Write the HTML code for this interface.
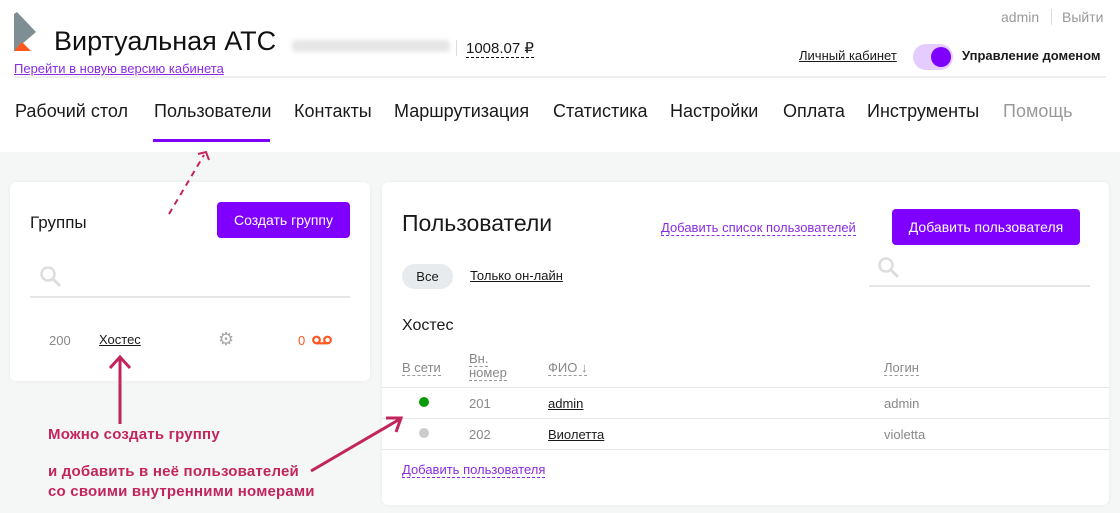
<!DOCTYPE html>
<html><head><meta charset="utf-8"><style>
*{margin:0;padding:0;box-sizing:border-box}
body{width:1120px;height:513px;overflow:hidden;background:#f5f6f6;font-family:"Liberation Sans",sans-serif;position:relative;color:#1a1a1a}
.a{position:absolute;white-space:nowrap}
.hdr{position:absolute;left:0;top:0;width:1120px;height:152px;background:#fff}
.card{position:absolute;background:#fff;border-radius:6px;box-shadow:0 0 3px rgba(0,0,0,.06)}
.nav{font-size:18px;top:101px;color:#1a1a1a}
.btn{position:absolute;background:#7f00ff;color:#fff;border-radius:4px;font-size:14px;text-align:center}
.dash{border-bottom:1px dashed #999}
.grey{color:#888}
.line{position:absolute;height:1px;background:#e6e6e6}
.red{color:#c2255c;font-size:15px;font-weight:bold;letter-spacing:.2px}
</style></head><body>
<div class="hdr"></div>
<svg class="a" style="left:14px;top:12px" width="24" height="40" viewBox="0 0 24 40"><polygon points="0,2 3,0 22,20 8,32 0,39" fill="#7f8d94"/><polygon points="0,39 8,30 17,39" fill="#ff5722"/></svg>
<div class="a" style="left:54px;top:26px;font-size:27px;color:#111">Виртуальная АТС</div>
<div class="a" style="left:292px;top:40px;width:158px;height:12px;background:#e6e6e6;border-radius:4px;filter:blur(2px)"></div>
<div class="a" style="left:456px;top:40px;width:1px;height:16px;background:#ddd"></div>
<div class="a" style="left:466px;top:39px;font-size:15px;border-bottom:1px dashed #111">1008.07 ₽</div>
<div class="a" style="left:14px;top:61px;font-size:13px;color:#8a2be2;text-decoration:underline">Перейти в новую версию кабинета</div>
<div class="a" style="left:1001px;top:9px;font-size:14px;color:#999">admin</div>
<div class="a" style="left:1051px;top:9px;width:1px;height:16px;background:#ddd"></div>
<div class="a" style="left:1062px;top:9px;font-size:14px;color:#999">Выйти</div>
<div class="a" style="left:799px;top:48px;font-size:13px;text-decoration:underline">Личный кабинет</div>
<div class="a" style="left:913px;top:44px;width:40px;height:26px;border-radius:13px;background:#e4ccff"></div>
<div class="a" style="left:931px;top:47px;width:20px;height:20px;border-radius:50%;background:#7f00ff"></div>
<div class="a" style="left:962px;top:48px;font-size:13px;font-weight:bold">Управление доменом</div>
<div class="line" style="left:14px;top:76px;width:1092px;background:#eee;height:2px"></div>
<div class="a nav" style="left:15px">Рабочий стол</div>
<div class="a nav" style="left:154px">Пользователи</div>
<div class="a" style="left:153px;top:139px;width:117px;height:3px;background:#7f00ff"></div>
<div class="a nav" style="left:294px">Контакты</div>
<div class="a nav" style="left:394px">Маршрутизация</div>
<div class="a nav" style="left:553px">Статистика</div>
<div class="a nav" style="left:670px">Настройки</div>
<div class="a nav" style="left:783px">Оплата</div>
<div class="a nav" style="left:867px">Инструменты</div>
<div class="a nav" style="left:1003px;color:#999">Помощь</div>

<div class="card" style="left:10px;top:182px;width:360px;height:199px"></div>
<div class="a" style="left:30px;top:213px;font-size:17px">Группы</div>
<div class="btn" style="left:217px;top:202px;width:133px;height:36px;line-height:36px">Создать группу</div>
<svg class="a" style="left:40px;top:266px" width="22" height="22"><circle cx="8" cy="8" r="6.5" fill="none" stroke="#ddd" stroke-width="2.5"/><line x1="13" y1="13" x2="20" y2="20" stroke="#ddd" stroke-width="3"/></svg>
<div class="line" style="left:30px;top:296px;width:320px;height:2px"></div>
<div class="a grey" style="left:49px;top:333px;font-size:13px">200</div>
<div class="a" style="left:99px;top:332px;font-size:13px;text-decoration:underline">Хостес</div>
<div class="a" style="left:218px;top:330px;font-size:18px;color:#aaa;line-height:18px">⚙</div>
<div class="a" style="left:298px;top:333px;font-size:13px;color:#ff5722">0</div>
<svg class="a" style="left:312px;top:335px" width="20" height="10"><circle cx="4.5" cy="5" r="3.3" fill="none" stroke="#ff5722" stroke-width="2.2"/><circle cx="15.5" cy="5" r="3.3" fill="none" stroke="#ff5722" stroke-width="2.2"/><line x1="4.5" y1="8.3" x2="15.5" y2="8.3" stroke="#ff5722" stroke-width="2.2"/></svg>

<div class="a red" style="left:48px;top:426px">Можно создать группу</div>
<div class="a red" style="left:48px;top:463px">и добавить в неё пользователей</div>
<div class="a red" style="left:48px;top:483px">со своими внутренними номерами</div>

<div class="card" style="left:382px;top:182px;width:727px;height:323px"></div>
<div class="a" style="left:402px;top:210px;font-size:23px">Пользователи</div>
<div class="a" style="left:661px;top:220px;font-size:13px;color:#8a2be2;border-bottom:1px dashed #8a2be2">Добавить список пользователей</div>
<div class="btn" style="left:892px;top:209px;width:188px;height:36px;line-height:36px">Добавить пользователя</div>
<div class="a" style="left:402px;top:264px;width:51px;height:25px;border-radius:13px;background:#e8ebed;font-size:13px;text-align:center;line-height:25px">Все</div>
<div class="a" style="left:470px;top:268px;font-size:13px;text-decoration:underline">Только он-лайн</div>
<svg class="a" style="left:878px;top:257px" width="22" height="22"><circle cx="8" cy="8" r="6.5" fill="none" stroke="#ddd" stroke-width="2.5"/><line x1="13" y1="13" x2="20" y2="20" stroke="#ddd" stroke-width="3"/></svg>
<div class="line" style="left:869px;top:285px;width:221px;height:2px"></div>
<div class="a" style="left:402px;top:317px;font-size:16px">Хостес</div>
<div class="a grey" style="left:402px;top:360px;font-size:13px;border-bottom:1px dashed #999">В сети</div>
<div class="a grey" style="left:469px;top:352px;font-size:13px;line-height:14px;white-space:normal;width:50px"><span class="dash">Вн.</span><br><span class="dash">номер</span></div>
<div class="a grey" style="left:548px;top:360px;font-size:13px;border-bottom:1px dashed #999">ФИО ↓</div>
<div class="a grey" style="left:884px;top:360px;font-size:13px;border-bottom:1px dashed #999">Логин</div>
<div class="line" style="left:382px;top:387px;width:727px"></div>
<div class="a" style="left:419px;top:397px;width:10px;height:10px;border-radius:50%;background:#0a9a0a"></div>
<div class="a grey" style="left:469px;top:396px;font-size:13px">201</div>
<div class="a" style="left:548px;top:396px;font-size:13px;text-decoration:underline">admin</div>
<div class="a grey" style="left:884px;top:396px;font-size:13px">admin</div>
<div class="line" style="left:382px;top:418px;width:727px"></div>
<div class="a" style="left:419px;top:428px;width:10px;height:10px;border-radius:50%;background:#ccc"></div>
<div class="a grey" style="left:469px;top:427px;font-size:13px">202</div>
<div class="a" style="left:548px;top:427px;font-size:13px;text-decoration:underline">Виолетта</div>
<div class="a grey" style="left:884px;top:427px;font-size:13px">violetta</div>
<div class="line" style="left:382px;top:449px;width:727px"></div>
<div class="a" style="left:402px;top:462px;font-size:13px;color:#8a2be2;border-bottom:1px dashed #8a2be2">Добавить пользователя</div>

<svg class="a" style="left:0;top:0" width="1120" height="513">
<line x1="169" y1="214" x2="204" y2="155" stroke="#c2255c" stroke-width="2" stroke-dasharray="6,5"/>
<polyline points="198,154 206,152 209,160" fill="none" stroke="#c2255c" stroke-width="2"/>
<line x1="120" y1="424" x2="120" y2="358" stroke="#c2255c" stroke-width="3"/>
<polyline points="110,368 120,357 130,368" fill="none" stroke="#c2255c" stroke-width="3"/>
<line x1="311" y1="471" x2="400" y2="419" stroke="#c2255c" stroke-width="3"/>
<polyline points="386,418 401,418 396,432" fill="none" stroke="#c2255c" stroke-width="3"/>
</svg>
</body></html>
